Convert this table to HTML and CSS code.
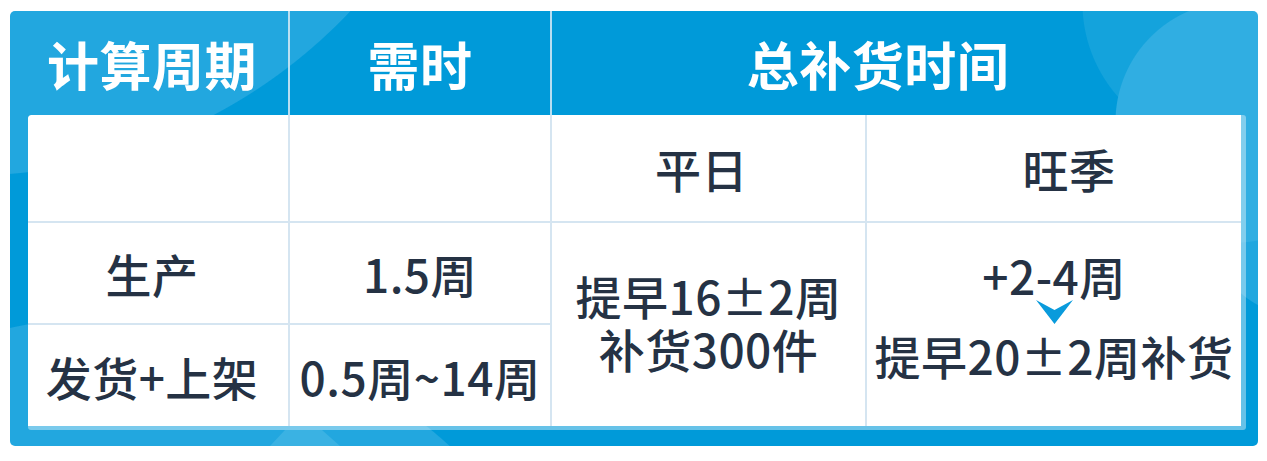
FILE: index.html
```html
<!DOCTYPE html>
<html lang="zh-CN">
<head>
<meta charset="utf-8">
<title>补货周期</title>
<link rel="stylesheet" href="styles.css">
</head>
<body>
<div class="card">
  <div class="head">
    <div class="hcell h1">计算周期</div>
    <div class="hcell h2">需时</div>
    <div class="hcell h3">总补货时间</div>
  </div>
  <div class="sheet">
    <div class="cell c1"></div>
    <div class="cell vl"></div>
    <div class="cell vl sub-a">平日</div>
    <div class="cell vl sub-b">旺季</div>

    <div class="cell c1 hl">生产</div>
    <div class="cell vl hl">1.5周</div>
    <div class="cell vl hl span2 normal">
      <p class="para">提早16±2周<br>补货300件</p>
    </div>
    <div class="cell vl hl span2 stack peak">
      <span class="line">+2-4周</span>
      <svg class="arrow" width="37" height="24" viewBox="0 0 37 24" aria-hidden="true"><path d="M0 0 L18.5 10 L37 0 L18.5 24 Z" fill="#0a9bdc"/></svg>
      <span class="line">提早20±2周补货</span>
    </div>

    <div class="cell c1 hl">发货+上架</div>
    <div class="cell vl hl">0.5周~14周</div>
  </div>
</div>
</body>
</html>
```
FILE: styles.css
```css
body {
  margin: 0;
  background: #ffffff;
  font-family: "Noto Sans CJK SC", "Noto Sans", sans-serif;
}

.card {
  position: relative;
  box-sizing: border-box;
  width: 1248px;
  height: 435px;
  margin: 11px 0 0 10px;
  padding: 0 12px 16px 18px;
  border-radius: 5px;
  overflow: hidden;
  background:
    radial-gradient(circle 121px at 1226px 111px, #30aee2 120px, transparent 121px),
    radial-gradient(circle 142px at 1214px -8px, #14a3dc 141px, transparent 142px),
    radial-gradient(circle 90px at 1290px 215px, #21a7df 89px, transparent 90px),
    radial-gradient(circle 525px at -41px -360px, #22a7df 524px, transparent 525px),
    radial-gradient(circle 495px at 106px 800px, #22a7df 494px, transparent 495px),
    #009ad9;
}

.card::after {
  content: "";
  position: absolute;
  left: 260px;
  top: 419px;
  width: 70px;
  height: 16px;
  background: #3ab2e3;
  clip-path: polygon(15px 0, 52px 0, 70px 100%, 0 100%);
}

.head {
  display: grid;
  grid-template-columns: 278px 262px 1fr;
  height: 104px;
  margin: 0 -12px 0 -18px;
}

.hcell {
  display: flex;
  align-items: center;
  justify-content: center;
  color: #ffffff;
  font-size: 52px;
  font-weight: 700;
  letter-spacing: 0.5px;
}

.hcell + .hcell {
  border-left: 2px solid rgba(214, 234, 246, 0.85);
}

.h1 {
  padding-left: 6px;
}

.h3 {
  padding-right: 54px;
}

.sheet {
  display: grid;
  grid-template-columns: 260px 262px 315px 376px;
  grid-template-rows: 106px 102px 103px;
  background: #ffffff;
  background-clip: padding-box;
  border-right: 5px solid rgba(255, 255, 255, 0.4);
  border-bottom: 4px solid rgba(255, 255, 255, 0.4);
  border-radius: 3px;
}

.cell {
  display: flex;
  align-items: center;
  justify-content: center;
  color: #253244;
  font-size: 46px;
  font-weight: 500;
  line-height: 1;
  letter-spacing: 0.5px;
}

.c1 {
  padding-right: 12px;
}

.vl {
  border-left: 2px solid #d5e5f1;
}

.hl {
  border-top: 2px solid #d5e5f1;
}

.sub-a {
  padding-right: 14px;
}

.sub-b {
  padding-left: 30px;
}

.span2 {
  grid-row: span 2;
}

.normal {
  padding-bottom: 6px;
}

.para {
  margin: 0;
  text-align: center;
  line-height: 53px;
}

.stack {
  flex-direction: column;
}

.peak {
  padding-bottom: 20px;
}

.peak .line {
  display: block;
  line-height: 46px;
}

.arrow {
  display: block;
  margin: 2px 0 8px;
}
```
